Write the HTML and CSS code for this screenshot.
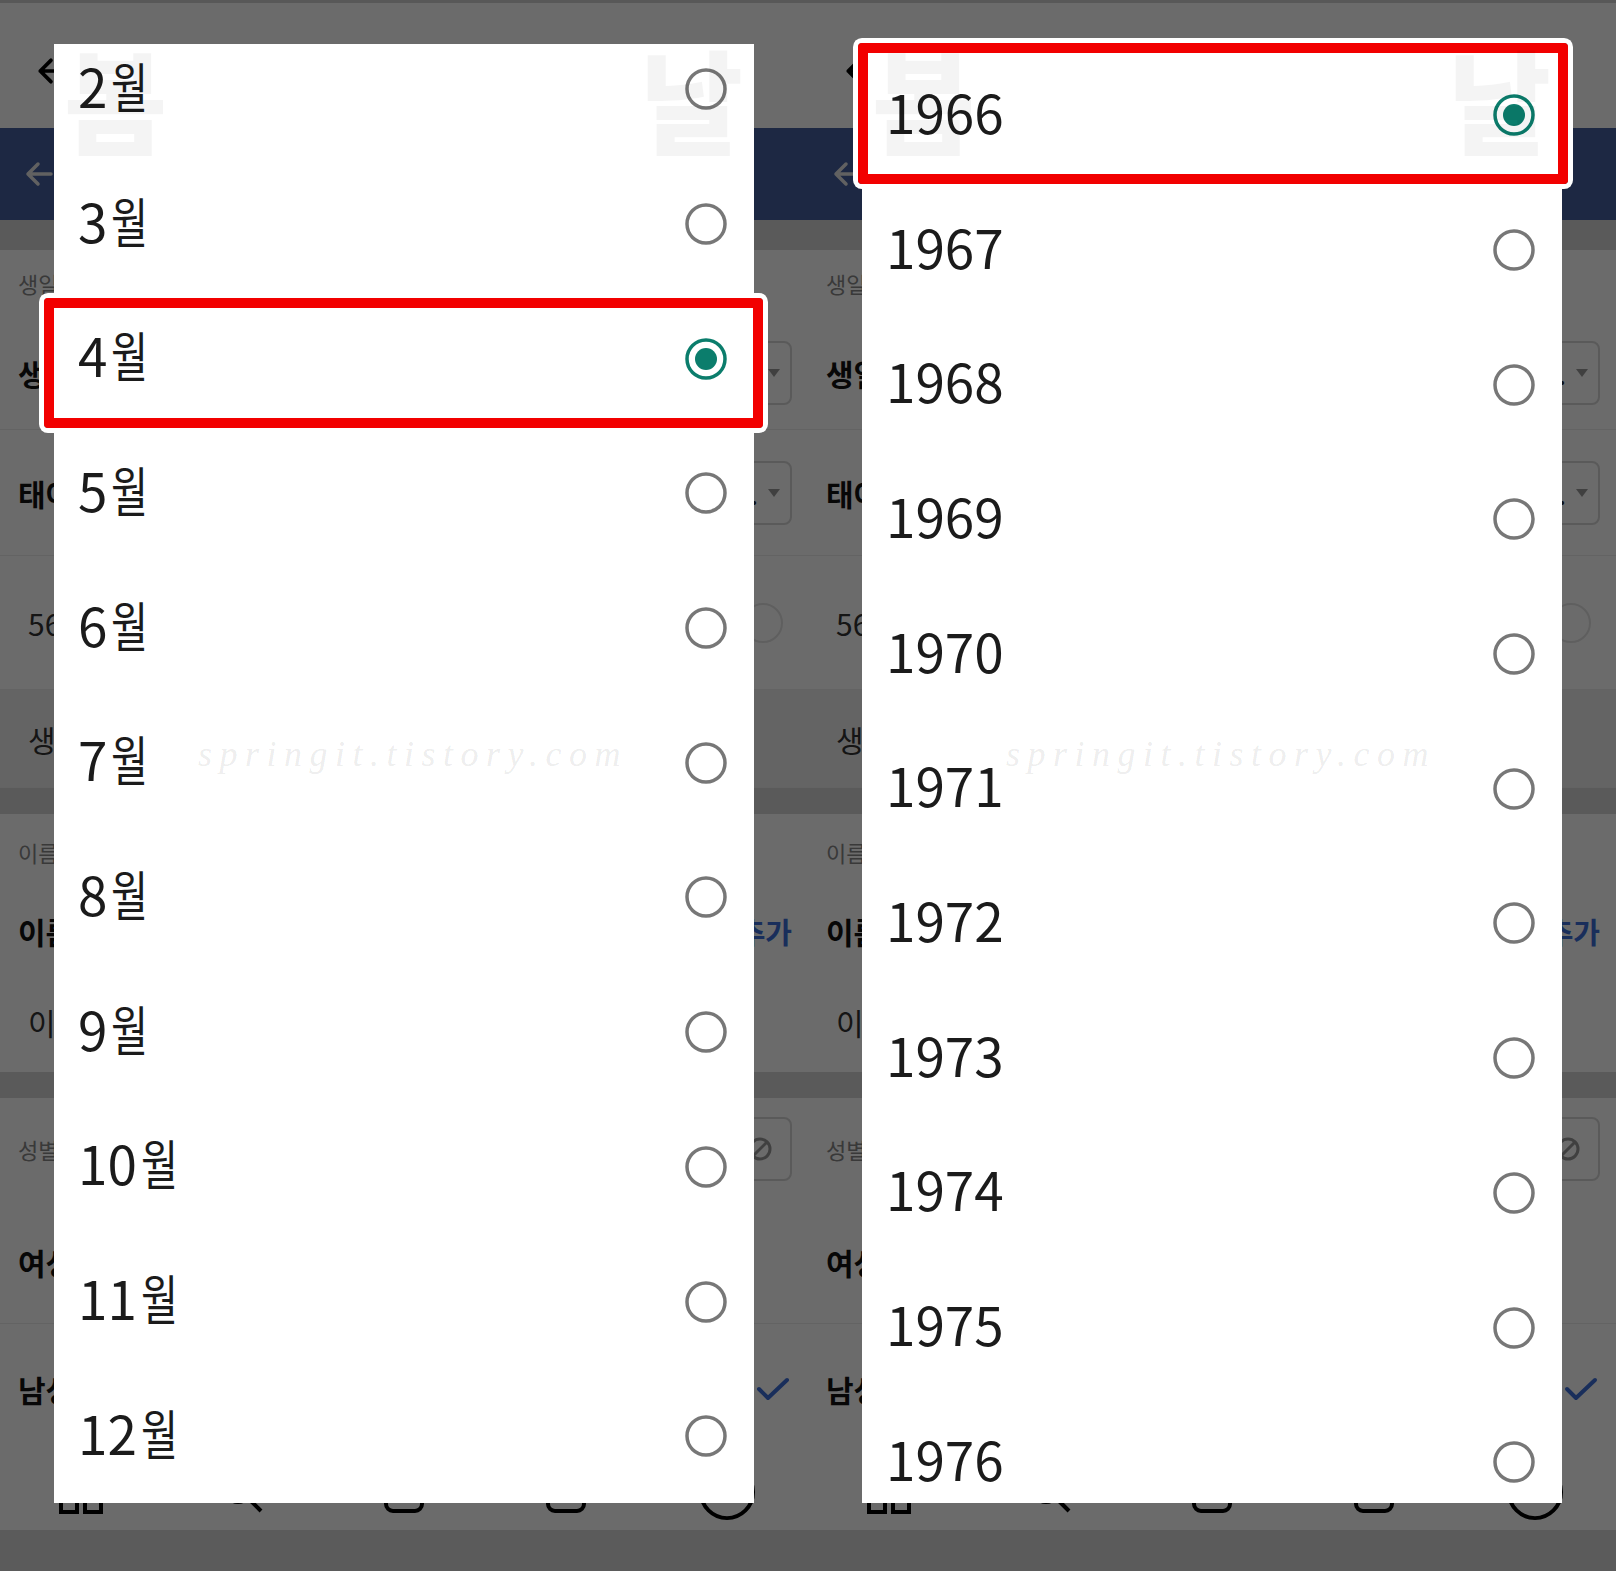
FILE: index.html
```html
<!DOCTYPE html>
<html lang="ko">
<head>
  <meta charset="UTF-8" />
  <title>월 / 연도 선택</title>
  <link rel="stylesheet" href="styles.css">
</head>
<body>
<div class="shot">

  <!-- Month picker -->
  <section class="panel">
    <div class="app">
      <header class="appbar">
        <svg class="back" viewBox="0 0 30 30"><path d="M27 15H4M14 5L4 15l10 10"/></svg>
      </header>
      <div class="topbar">
        <svg class="back back-light" viewBox="0 0 30 30"><path d="M27 15H4M14 5L4 15l10 10"/></svg>
        <span>정보 입력</span>
      </div>
      <div class="gap"></div>
      <div class="label">생일 정보</div>
      <div class="field field-birth">
        <span>생일</span>
        <div class="select">1966. 4.<svg class="caret" viewBox="0 0 12 8"><path d="M0 0h12L6 8z"/></svg></div>
      </div>
      <div class="field field-time">
        <span>태어난 시간</span>
        <div class="select">09. 30.<svg class="caret" viewBox="0 0 12 8"><path d="M0 0h12L6 8z"/></svg></div>
      </div>
      <div class="field field-age plain">
        <span>56세</span>
        <span class="toggle"></span>
      </div>
      <div class="field field-note plain"><span>생년월일을 정확히 입력해 주세요</span></div>
      <div class="gap gap-thin"></div>
      <div class="label label-name">이름</div>
      <div class="field field-name">
        <span>이름</span>
        <span class="add">+ 추가</span>
      </div>
      <div class="field field-input plain"><span>이름을 입력하세요</span></div>
      <div class="gap gap-thin"></div>
      <div class="label label-gender">
        <span>성별</span>
        <span class="icon-btn"><svg viewBox="0 0 28 28"><circle cx="14" cy="14" r="10"/><path d="M7 21L21 7"/></svg></span>
      </div>
      <div class="field field-female"><span>여성</span></div>
      <div class="field field-male">
        <span>남성</span>
        <svg class="check" viewBox="0 0 34 26"><path d="M3 13l9 9L31 4"/></svg>
      </div>
      <nav class="tabbar">
        <span class="tab"><svg viewBox="0 0 46 46"><rect x="3" y="3" width="16" height="16"/><rect x="27" y="3" width="16" height="16"/><rect x="3" y="27" width="16" height="16"/><rect x="27" y="27" width="16" height="16"/></svg></span>
        <span class="tab"><svg viewBox="0 0 46 46"><circle cx="19" cy="19" r="14"/><path d="M29 29l13 13"/></svg></span>
        <span class="tab"><svg viewBox="0 0 46 46"><rect x="5" y="8" width="36" height="34" rx="7"/></svg></span>
        <span class="tab"><svg viewBox="0 0 46 46"><rect x="5" y="8" width="36" height="34" rx="7"/></svg></span>
        <span class="tab"><svg class="tab-wide" viewBox="0 0 60 60"><circle cx="30" cy="30" r="27"/></svg></span>
      </nav>
      <div class="sysbar"></div>
    </div>
    <div class="scrim"></div>

    <div class="dialog">
      <ul class="options options-month">
        <li class="option"><span class="option-text">2<span class="unit">월</span></span><svg class="radio" viewBox="0 0 44 44"><circle cx="22" cy="22" r="19"/></svg></li>
        <li class="option"><span class="option-text">3<span class="unit">월</span></span><svg class="radio" viewBox="0 0 44 44"><circle cx="22" cy="22" r="19"/></svg></li>
        <li class="option"><span class="option-text">4<span class="unit">월</span></span><svg class="radio radio-on" viewBox="0 0 44 44"><circle cx="22" cy="22" r="19"/><circle class="dot" cx="22" cy="22" r="11"/></svg></li>
        <li class="option"><span class="option-text">5<span class="unit">월</span></span><svg class="radio" viewBox="0 0 44 44"><circle cx="22" cy="22" r="19"/></svg></li>
        <li class="option"><span class="option-text">6<span class="unit">월</span></span><svg class="radio" viewBox="0 0 44 44"><circle cx="22" cy="22" r="19"/></svg></li>
        <li class="option"><span class="option-text">7<span class="unit">월</span></span><svg class="radio" viewBox="0 0 44 44"><circle cx="22" cy="22" r="19"/></svg></li>
        <li class="option"><span class="option-text">8<span class="unit">월</span></span><svg class="radio" viewBox="0 0 44 44"><circle cx="22" cy="22" r="19"/></svg></li>
        <li class="option"><span class="option-text">9<span class="unit">월</span></span><svg class="radio" viewBox="0 0 44 44"><circle cx="22" cy="22" r="19"/></svg></li>
        <li class="option"><span class="option-text">10<span class="unit">월</span></span><svg class="radio" viewBox="0 0 44 44"><circle cx="22" cy="22" r="19"/></svg></li>
        <li class="option"><span class="option-text">11<span class="unit">월</span></span><svg class="radio" viewBox="0 0 44 44"><circle cx="22" cy="22" r="19"/></svg></li>
        <li class="option"><span class="option-text">12<span class="unit">월</span></span><svg class="radio" viewBox="0 0 44 44"><circle cx="22" cy="22" r="19"/></svg></li>
      </ul>
    </div>

    <div class="mark mark-month"></div>

    <span class="wm wm-left">봄</span>
    <span class="wm wm-right">날</span>
    <span class="wm-url">springit.tistory.com</span>
  </section>

  <!-- Year picker -->
  <section class="panel">
    <div class="app">
      <header class="appbar">
        <svg class="back" viewBox="0 0 30 30"><path d="M27 15H4M14 5L4 15l10 10"/></svg>
      </header>
      <div class="topbar">
        <svg class="back back-light" viewBox="0 0 30 30"><path d="M27 15H4M14 5L4 15l10 10"/></svg>
        <span>정보 입력</span>
      </div>
      <div class="gap"></div>
      <div class="label">생일 정보</div>
      <div class="field field-birth">
        <span>생일</span>
        <div class="select">1966. 4.<svg class="caret" viewBox="0 0 12 8"><path d="M0 0h12L6 8z"/></svg></div>
      </div>
      <div class="field field-time">
        <span>태어난 시간</span>
        <div class="select">09. 30.<svg class="caret" viewBox="0 0 12 8"><path d="M0 0h12L6 8z"/></svg></div>
      </div>
      <div class="field field-age plain">
        <span>56세</span>
        <span class="toggle"></span>
      </div>
      <div class="field field-note plain"><span>생년월일을 정확히 입력해 주세요</span></div>
      <div class="gap gap-thin"></div>
      <div class="label label-name">이름</div>
      <div class="field field-name">
        <span>이름</span>
        <span class="add">+ 추가</span>
      </div>
      <div class="field field-input plain"><span>이름을 입력하세요</span></div>
      <div class="gap gap-thin"></div>
      <div class="label label-gender">
        <span>성별</span>
        <span class="icon-btn"><svg viewBox="0 0 28 28"><circle cx="14" cy="14" r="10"/><path d="M7 21L21 7"/></svg></span>
      </div>
      <div class="field field-female"><span>여성</span></div>
      <div class="field field-male">
        <span>남성</span>
        <svg class="check" viewBox="0 0 34 26"><path d="M3 13l9 9L31 4"/></svg>
      </div>
      <nav class="tabbar">
        <span class="tab"><svg viewBox="0 0 46 46"><rect x="3" y="3" width="16" height="16"/><rect x="27" y="3" width="16" height="16"/><rect x="3" y="27" width="16" height="16"/><rect x="27" y="27" width="16" height="16"/></svg></span>
        <span class="tab"><svg viewBox="0 0 46 46"><circle cx="19" cy="19" r="14"/><path d="M29 29l13 13"/></svg></span>
        <span class="tab"><svg viewBox="0 0 46 46"><rect x="5" y="8" width="36" height="34" rx="7"/></svg></span>
        <span class="tab"><svg viewBox="0 0 46 46"><rect x="5" y="8" width="36" height="34" rx="7"/></svg></span>
        <span class="tab"><svg class="tab-wide" viewBox="0 0 60 60"><circle cx="30" cy="30" r="27"/></svg></span>
      </nav>
      <div class="sysbar"></div>
    </div>
    <div class="scrim"></div>

    <div class="dialog">
      <ul class="options options-year">
        <li class="option"><span class="option-text">1966</span><svg class="radio radio-on" viewBox="0 0 44 44"><circle cx="22" cy="22" r="19"/><circle class="dot" cx="22" cy="22" r="11"/></svg></li>
        <li class="option"><span class="option-text">1967</span><svg class="radio" viewBox="0 0 44 44"><circle cx="22" cy="22" r="19"/></svg></li>
        <li class="option"><span class="option-text">1968</span><svg class="radio" viewBox="0 0 44 44"><circle cx="22" cy="22" r="19"/></svg></li>
        <li class="option"><span class="option-text">1969</span><svg class="radio" viewBox="0 0 44 44"><circle cx="22" cy="22" r="19"/></svg></li>
        <li class="option"><span class="option-text">1970</span><svg class="radio" viewBox="0 0 44 44"><circle cx="22" cy="22" r="19"/></svg></li>
        <li class="option"><span class="option-text">1971</span><svg class="radio" viewBox="0 0 44 44"><circle cx="22" cy="22" r="19"/></svg></li>
        <li class="option"><span class="option-text">1972</span><svg class="radio" viewBox="0 0 44 44"><circle cx="22" cy="22" r="19"/></svg></li>
        <li class="option"><span class="option-text">1973</span><svg class="radio" viewBox="0 0 44 44"><circle cx="22" cy="22" r="19"/></svg></li>
        <li class="option"><span class="option-text">1974</span><svg class="radio" viewBox="0 0 44 44"><circle cx="22" cy="22" r="19"/></svg></li>
        <li class="option"><span class="option-text">1975</span><svg class="radio" viewBox="0 0 44 44"><circle cx="22" cy="22" r="19"/></svg></li>
        <li class="option"><span class="option-text">1976</span><svg class="radio" viewBox="0 0 44 44"><circle cx="22" cy="22" r="19"/></svg></li>
      </ul>
    </div>

    <div class="mark mark-year"></div>

    <span class="wm wm-left">봄</span>
    <span class="wm wm-right">날</span>
    <span class="wm-url">springit.tistory.com</span>
  </section>

</div>
</body>
</html>
```

FILE: styles.css
```css
* { box-sizing: border-box; }
body { margin: 0; background: #5e5e5e; font-family: "Noto Sans CJK KR", "Noto Sans", sans-serif; }

.shot { display: flex; width: 1616px; height: 1571px; overflow: hidden; }
.panel { position: relative; flex: none; width: 808px; height: 1571px; overflow: hidden; background: #fff; }

/* Background screen (dimmed by the scrim) */
.app { display: flex; flex-direction: column; height: 100%; }
.appbar { flex: none; height: 128px; border-top: 3px solid #d2d2d2; padding: 52px 0 0 36px; }
.back { display: block; width: 32px; height: 32px; fill: none; stroke: #000; stroke-width: 3.5; stroke-linecap: round; stroke-linejoin: round; }
.topbar { flex: none; height: 92px; background: #46609f; display: flex; align-items: center; gap: 24px; padding-left: 24px; color: #fff; font-size: 30px; font-weight: 700; }
.back-light { width: 30px; height: 30px; stroke: #e8e8e8; }
.gap { flex: none; height: 30px; background: #d6d6d6; }
.gap-thin { height: 26px; }

.label { flex: none; height: 66px; display: flex; align-items: center; justify-content: space-between; padding: 0 16px 0 18px; font-size: 22px; color: #888; }
.label-name { height: 76px; }
.label-gender { height: 102px; }

.field { flex: none; display: flex; align-items: center; justify-content: space-between; padding: 0 16px 0 18px; font-size: 30px; font-weight: 700; color: #111; border-bottom: 1px solid #ececec; }
.field.plain { padding-left: 28px; font-weight: 400; color: #333; }
.field-birth { height: 114px; }
.field-time { height: 126px; }
.field-age { height: 134px; }
.field-note { height: 98px; background: #eeeeee; }
.field-name { height: 82px; border-bottom: none; }
.field-input { height: 100px; border-bottom: none; }
.field-female { height: 124px; }
.field-male { height: 130px; border-bottom: none; }

.select { width: 210px; height: 64px; border: 2px solid #d6d6d6; border-radius: 8px; display: flex; align-items: center; justify-content: flex-end; gap: 10px; padding-right: 10px; font-size: 28px; font-weight: 400; color: #222; }
.caret { width: 12px; height: 8px; fill: #9a9a9a; }
.toggle { width: 40px; height: 40px; margin-right: 9px; border: 2px solid #e2e2e2; border-radius: 50%; }
.add { color: #3c6fd8; font-size: 29px; font-weight: 700; }
.icon-btn { width: 64px; height: 64px; border: 2px solid #d6d6d6; border-radius: 8px; display: flex; align-items: center; justify-content: center; }
.icon-btn svg { width: 28px; height: 28px; fill: none; stroke: #999; stroke-width: 3; }
.check { width: 34px; height: 26px; margin-right: 2px; fill: none; stroke: #3c6fd8; stroke-width: 4; stroke-linecap: round; stroke-linejoin: round; }

.tabbar { flex: none; height: 76px; display: flex; align-items: center; }
.tab { flex: 1; display: flex; justify-content: center; }
.tab svg { width: 46px; height: 46px; fill: none; stroke: #000; stroke-width: 4; }
.tab .tab-wide { width: 58px; height: 58px; }
.sysbar { flex: 1; background: #dadada; }

.scrim { position: absolute; inset: 0; z-index: 1; background: rgba(0, 0, 0, 0.58); }

/* Picker dialog */
.dialog { position: absolute; z-index: 2; left: 54px; top: 44px; width: 700px; height: 1459px; background: #fff; overflow: hidden; }
.options { list-style: none; margin: 0; padding: 0; }
.options-month { margin-top: -22px; }
.options-year { margin-top: 4px; }
.option { height: 134.7px; display: flex; align-items: center; justify-content: space-between; padding: 0 26px 0 24px; font-size: 53px; line-height: 1; color: #1b1b1b; }
.option-text { white-space: nowrap; margin-bottom: 8px; }
.unit { display: inline-block; margin-left: 4px; transform: scaleX(0.76); transform-origin: left center; }
.radio { width: 44px; height: 44px; fill: none; stroke: #777; stroke-width: 3.5; }
.radio-on { stroke: #0b7d6c; }
.radio .dot { fill: #0b7d6c; stroke: none; }

/* Red annotation box */
.mark { position: absolute; z-index: 3; border: 10px solid #f20000; border-radius: 4px; box-shadow: 0 0 0 5px #fff; }
.mark-month { left: 44px; top: 298px; width: 719px; height: 130px; }
.mark-year { left: 50px; top: 43px; width: 710px; height: 141px; }

/* Blog watermarks */
.wm { position: absolute; z-index: 4; top: 41px; font-size: 112px; font-weight: 900; line-height: 1; color: rgba(0, 0, 0, 0.045); pointer-events: none; }
.wm-left { left: 64px; }
.wm-right { left: 640px; }
.wm-url { position: absolute; z-index: 4; left: 198px; top: 733px; font-family: "Liberation Serif", serif; font-style: italic; font-size: 36px; letter-spacing: 7.5px; color: rgba(0, 0, 0, 0.085); pointer-events: none; }
```
